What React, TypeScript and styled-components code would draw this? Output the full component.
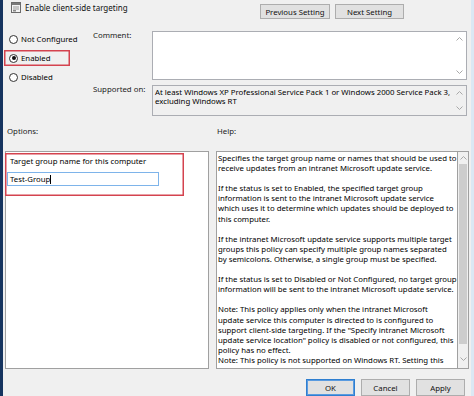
import styled, { createGlobalStyle } from "styled-components";

const GlobalStyle = createGlobalStyle`
  html, body {
    margin: 0;
    padding: 0;
    background: #f0f0f0;
  }
  body {
    font-family: "Noto Sans", "Liberation Sans", sans-serif;
    font-size: 7.8px;
    color: #000;
  }
`;

const helpParagraphs = [
  [
    "Specifies the target group name or names that should be used to",
    "receive updates from an intranet Microsoft update service.",
  ],
  [
    "If the status is set to Enabled, the specified target group",
    "information is sent to the intranet Microsoft update service",
    "which uses it to determine which updates should be deployed to",
    "this computer.",
  ],
  [
    "If the intranet Microsoft update service supports multiple target",
    "groups this policy can specify multiple group names separated",
    "by semicolons. Otherwise, a single group must be specified.",
  ],
  [
    "If the status is set to Disabled or Not Configured, no target group",
    "information will be sent to the intranet Microsoft update service.",
  ],
  [
    "Note: This policy applies only when the intranet Microsoft",
    "update service this computer is directed to is configured to",
    'support client-side targeting. If the "Specify intranet Microsoft',
    'update service location" policy is disabled or not configured, this',
    "policy has no effect.",
    "Note: This policy is not supported on Windows RT. Setting this",
  ],
];

const radios = [
  { label: "Not Configured", checked: false },
  { label: "Enabled", checked: true },
  { label: "Disabled", checked: false },
];

function Chevron({ up }: { up?: boolean }) {
  return (
    <svg width="7" height="4" viewBox="0 0 7 4">
      <path
        d={up ? "M0.5 3.5 L3.5 0.5 L6.5 3.5" : "M0.5 0.5 L3.5 3.5 L6.5 0.5"}
        fill="none"
        stroke="#a8a8a8"
        strokeWidth="1"
      />
    </svg>
  );
}

function PolicyIcon() {
  return (
    <svg width="10" height="11" viewBox="0 0 10 11">
      <rect x="0.5" y="0.5" width="9" height="10" fill="#f4f4f4" stroke="#6b6b6b" />
      <rect x="1" y="1" width="8" height="2" fill="#7a7a7a" />
      <path d="M2 5 H8 M2 7 H8" stroke="#9a9a9a" strokeWidth="1" />
      <rect x="2" y="8" width="3" height="1.5" fill="#8a8a8a" />
    </svg>
  );
}

function App() {
  return (
    <Screen>
      <GlobalStyle />
      <EdgeLeft />
      <Dialog>
        <Header>
          <Title>
            <PolicyIcon />
            <span>Enable client-side targeting</span>
          </Title>
          <NavButtons>
            <Button $width={70} $height={15}>Previous Setting</Button>
            <Button $width={69} $height={15}>Next Setting</Button>
          </NavButtons>
        </Header>

        <TopGrid>
          <RadioGroup>
            {radios.map((r) => (
              <RadioItem key={r.label} $highlight={r.checked}>
                <RadioCircle $checked={r.checked} />
                <span>{r.label}</span>
              </RadioItem>
            ))}
          </RadioGroup>
          <FieldLabel>Comment:</FieldLabel>
          <TextBox $readOnly={false}>
            <BoxText />
            <ArrowCol>
              <Chevron up />
              <Chevron />
            </ArrowCol>
          </TextBox>
          <FieldLabel>Supported on:</FieldLabel>
          <TextBox $readOnly>
            <BoxText>
              At least Windows XP Professional Service Pack 1 or Windows 2000 Service Pack 3,
              <br />
              excluding Windows RT
            </BoxText>
            <ArrowCol>
              <Chevron up />
              <Chevron />
            </ArrowCol>
          </TextBox>
        </TopGrid>

        <SectionLabels>
          <SectionLabel $pad={2}>Options:</SectionLabel>
          <SectionLabel $pad={1}>Help:</SectionLabel>
        </SectionLabels>

        <Panels>
          <OptionsPanel>
            <OptionField>
              <OptionLabel>Target group name for this computer</OptionLabel>
              <Input>
                Test-Group
                <Caret />
              </Input>
            </OptionField>
          </OptionsPanel>
          <HelpPanel>
            <HelpText>
              {helpParagraphs.map((lines, i) => (
                <HelpParagraph key={i}>
                  {lines.map((line, j) => (
                    <HelpLine key={j}>{line}</HelpLine>
                  ))}
                </HelpParagraph>
              ))}
            </HelpText>
            <ScrollBar>
              <Chevron up />
              <Thumb />
              <Chevron />
            </ScrollBar>
          </HelpPanel>
        </Panels>

        <Footer>
          <Button $width={49} $height={17} $default>OK</Button>
          <Button $width={49} $height={17}>Cancel</Button>
          <Button $width={49} $height={17}>Apply</Button>
        </Footer>
      </Dialog>
      <EdgeRight />
    </Screen>
  );
}

export default App;

const Screen = styled.div`
  display: flex;
  width: 474px;
  height: 396px;
  overflow: hidden;
  background: #f0f0f0;
`;

const EdgeLeft = styled.div`
  width: 3px;
  flex-shrink: 0;
  background: #16345f;
`;

const EdgeRight = styled.div`
  width: 3px;
  flex-shrink: 0;
  background: #dbe8f4;
`;

const Dialog = styled.div`
  flex: 1;
  display: flex;
  flex-direction: column;
  padding: 0 3px 0 2px;
  min-width: 0;
`;

const Header = styled.div`
  display: flex;
  align-items: flex-start;
  height: 31px;
  flex-shrink: 0;
`;

const Title = styled.div`
  display: flex;
  align-items: center;
  gap: 4px;
  margin: 1px 0 0 6px;
  height: 12px;
  font-size: 8px;
  color: #111;
`;

const NavButtons = styled.div`
  display: flex;
  gap: 5px;
  margin: 4px 64px 0 auto;
`;

interface ButtonProps {
  $width: number;
  $height: number;
  $default?: boolean;
}

const Button = styled.div<ButtonProps>`
  display: flex;
  align-items: center;
  justify-content: center;
  box-sizing: border-box;
  width: ${(p) => p.$width}px;
  height: ${(p) => p.$height}px;
  background: #e1e1e1;
  border: 1px solid ${(p) => (p.$default ? "#2f7fd0" : "#adadad")};
  box-shadow: ${(p) => (p.$default ? "inset 0 0 0 1px #5a9be0" : "none")};
  color: #111;
  white-space: nowrap;
`;

const TopGrid = styled.div`
  display: grid;
  grid-template-columns: 88px 59px 315px;
  grid-template-rows: 49px 31px;
  row-gap: 5px;
`;

const RadioGroup = styled.div`
  grid-row: 1 / span 2;
  display: flex;
  flex-direction: column;
  align-items: flex-start;
  gap: 3px;
`;

const RadioItem = styled.div<{ $highlight: boolean }>`
  display: flex;
  align-items: center;
  gap: 3px;
  height: 16px;
  box-sizing: border-box;
  margin-left: ${(p) => (p.$highlight ? "-1px" : "0")};
  padding-left: ${(p) => (p.$highlight ? "5px" : "4px")};
  width: ${(p) => (p.$highlight ? "66px" : "auto")};
  box-shadow: ${(p) => (p.$highlight ? "inset 0 0 0 1.5px #d4434f" : "none")};
  white-space: nowrap;
`;

const RadioCircle = styled.span<{ $checked: boolean }>`
  display: flex;
  align-items: center;
  justify-content: center;
  box-sizing: border-box;
  width: 9px;
  height: 9px;
  border: 1px solid #333;
  border-radius: 50%;
  background: #fff;

  &::after {
    content: "";
    display: ${(p) => (p.$checked ? "block" : "none")};
    width: 4px;
    height: 4px;
    border-radius: 50%;
    background: #111;
  }
`;

const FieldLabel = styled.div`
  line-height: 8px;
  color: #222;
  white-space: nowrap;
`;

const TextBox = styled.div<{ $readOnly: boolean }>`
  display: flex;
  box-sizing: border-box;
  border: 1px solid #abadb3;
  background: ${(p) => (p.$readOnly ? "#f0f0f0" : "#fff")};
`;

const BoxText = styled.div`
  flex: 1;
  padding: 2px 2px 0 2px;
  line-height: 9px;
  white-space: nowrap;
  overflow: hidden;
`;

const ArrowCol = styled.div`
  width: 13px;
  display: flex;
  flex-direction: column;
  align-items: center;
  justify-content: space-between;
  padding: 5px 0;
`;

const SectionLabels = styled.div`
  display: grid;
  grid-template-columns: 211px 1fr;
  margin-top: 10px;
  height: 10px;
  line-height: 10px;
`;

const SectionLabel = styled.div<{ $pad: number }>`
  padding-left: ${(p) => p.$pad}px;
  color: #222;
`;

const Panels = styled.div`
  display: grid;
  grid-template-columns: 204px 253px;
  column-gap: 7px;
  margin-top: 15px;
  height: 218px;
  flex-shrink: 0;
`;

const OptionsPanel = styled.div`
  box-sizing: border-box;
  border: 1px solid #a0a0a0;
  background: #fff;
`;

const OptionField = styled.div`
  box-sizing: border-box;
  width: 179px;
  height: 43px;
  margin: 1px 0 0 -1px;
  padding: 3px 0 0 5px;
  box-shadow: inset 0 0 0 1.5px #d4434f;
  display: flex;
  flex-direction: column;
  align-items: flex-start;
`;

const OptionLabel = styled.div`
  line-height: 10px;
  white-space: nowrap;
`;

const Input = styled.div`
  display: flex;
  align-items: center;
  box-sizing: border-box;
  width: 152px;
  height: 14px;
  margin: 6px 0 0 -3px;
  padding-left: 2px;
  border: 1px solid #7eb4ea;
  background: #fff;
  white-space: nowrap;
`;

const Caret = styled.span`
  display: inline-block;
  width: 1px;
  height: 9px;
  background: #000;
`;

const HelpPanel = styled.div`
  display: flex;
  box-sizing: border-box;
  border: 1px solid #a0a0a0;
  background: #fff;
  overflow: hidden;
`;

const HelpText = styled.div`
  flex: 1;
  padding: 1px 0 0 1px;
  border-right: 1px solid #a0a0a0;
  overflow: hidden;
`;

const HelpParagraph = styled.div`
  margin-bottom: 10.1px;

  &:last-child {
    margin-bottom: 0;
  }
`;

const HelpLine = styled.div`
  line-height: 10.1px;
  white-space: nowrap;
`;

const ScrollBar = styled.div`
  width: 10px;
  display: flex;
  flex-direction: column;
  align-items: center;
  gap: 4px;
  padding: 4px 0;
  background: #f0f0f0;
`;

const Thumb = styled.div`
  width: 8px;
  height: 180px;
  margin-bottom: 9px;
  background: #cdcdcd;
`;

const Footer = styled.div`
  display: flex;
  justify-content: flex-end;
  gap: 6px;
  margin-top: 10px;
  padding-right: 3px;
`;
